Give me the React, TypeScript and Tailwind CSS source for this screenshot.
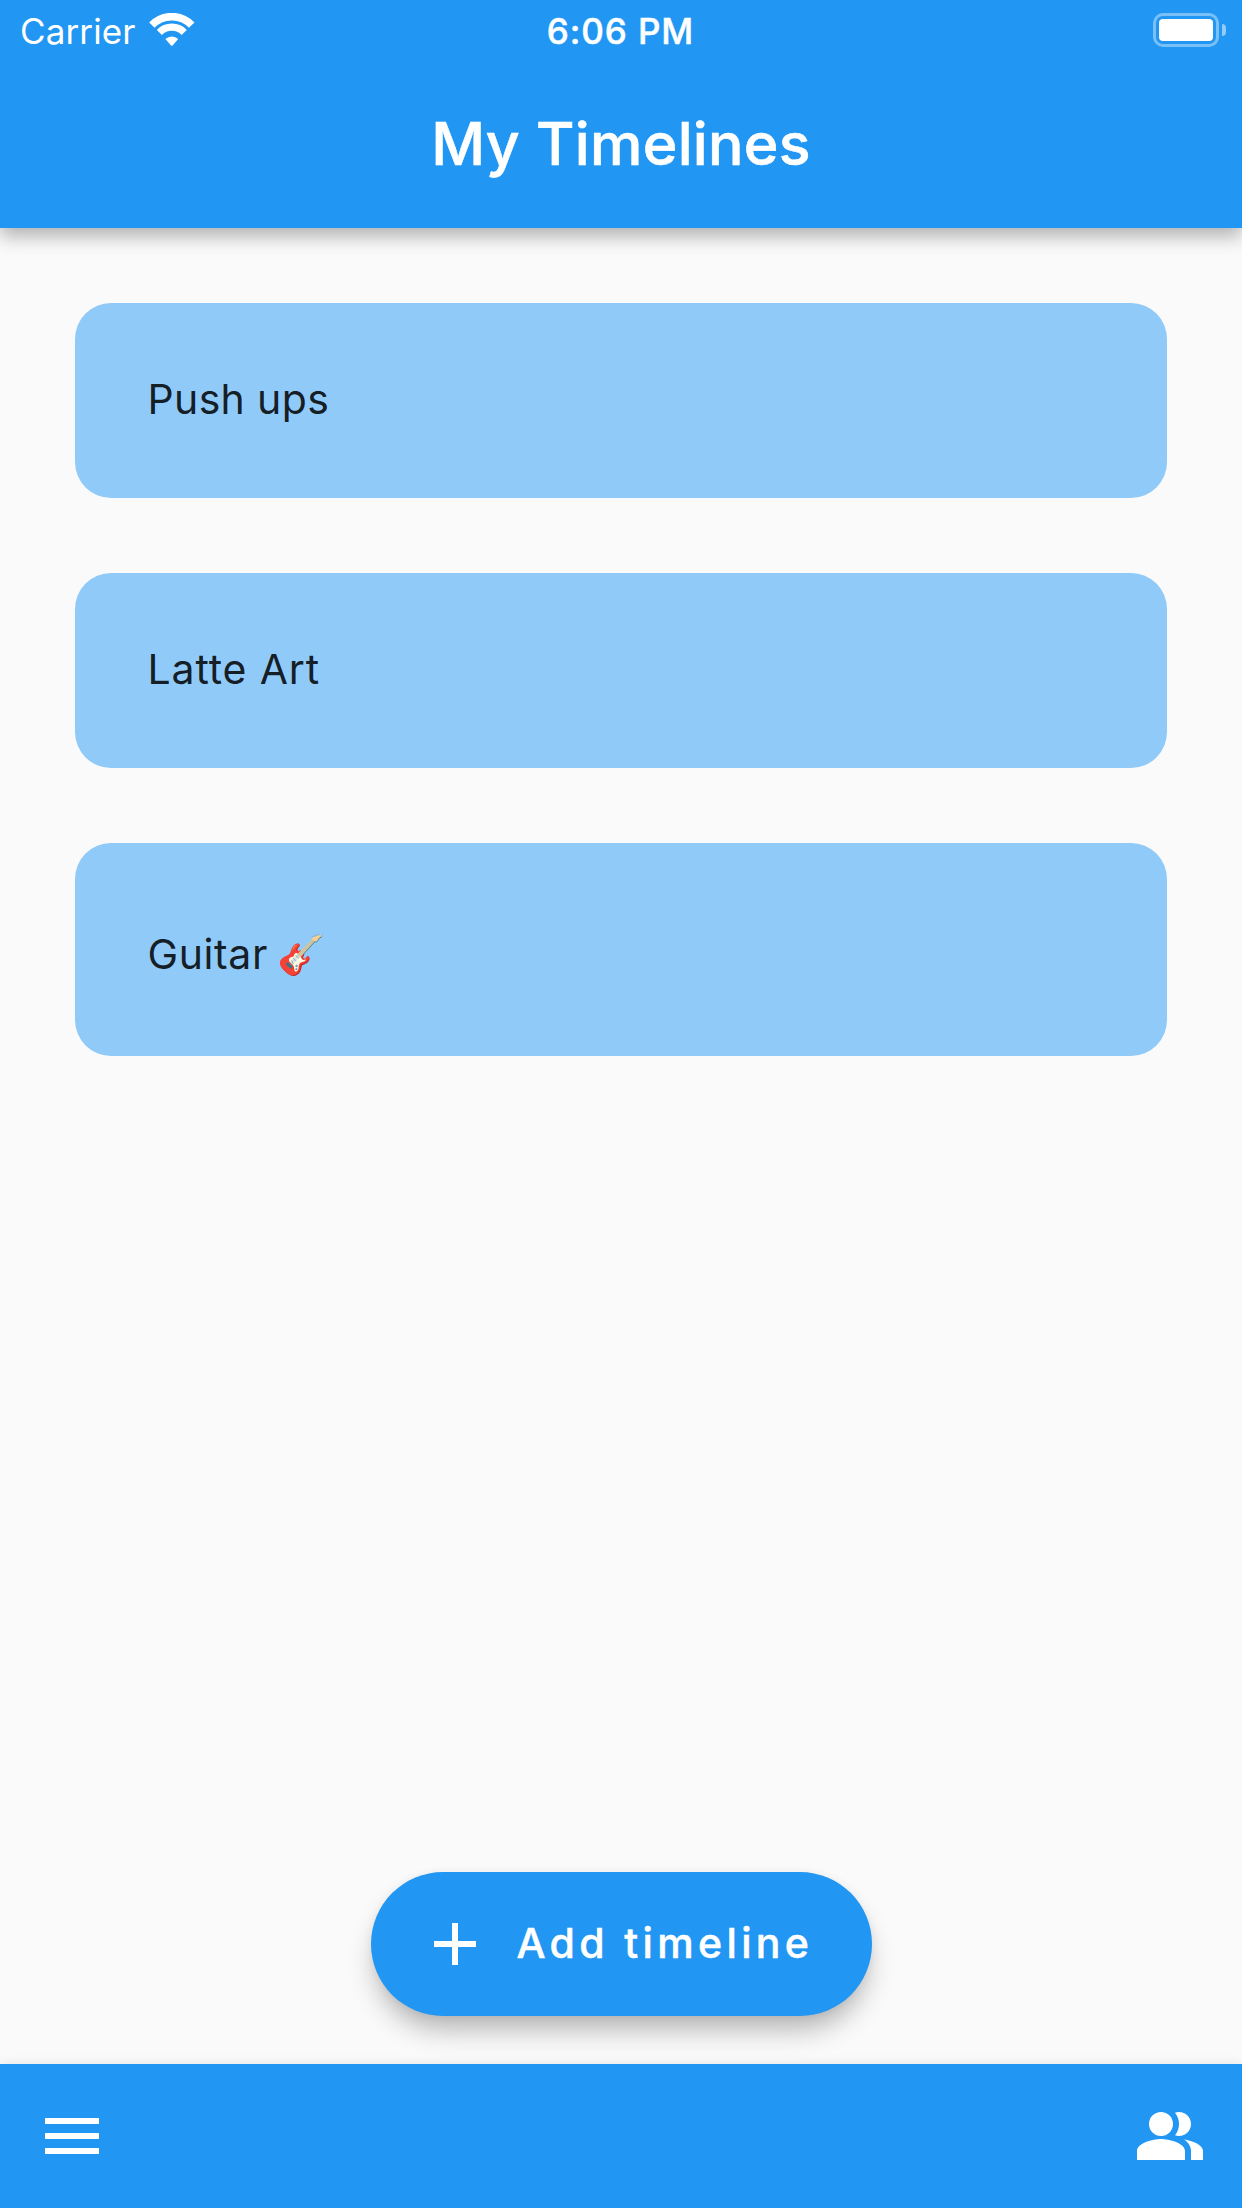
import React from "react";
import { MdAdd, MdMenu, MdPeopleAlt } from "react-icons/md";

function WifiIcon() {
  return (
    <svg width="46" height="34" viewBox="0 0 46 34" fill="none" className="shrink-0">
      <path d="M2.9 12.1A27.6 27.6 0 0 1 42.7 12.1" stroke="white" strokeWidth="7.6" />
      <path d="M10.4 19.4A17.2 17.2 0 0 1 35.2 19.4" stroke="white" strokeWidth="7.2" />
      <path d="M16.4 26A9.3 9.3 0 0 1 29.2 26L23.6 32.4Q22.8 33.3 22 32.4Z" fill="white" />
    </svg>
  );
}

function Battery() {
  return (
    <div className="flex items-center gap-[3px]">
      <div className="h-[34px] w-[66px] rounded-[10px] border-3 border-white/40 p-[3px]">
        <div className="h-full w-full rounded-[4px] bg-white" />
      </div>
      <div className="h-3 w-1 rounded-r-full bg-white/50" />
    </div>
  );
}

function StatusBar() {
  return (
    <div className="grid h-[60px] grid-cols-3 items-center pr-4 pl-5">
      <div className="flex items-center">
        <span className="w-[129px] pt-[2px] text-[35px] leading-[44px] tracking-[0.13px]">Carrier</span>
        <WifiIcon />
      </div>
      <div className="pt-[2px] pr-[5px] text-center text-[35px] leading-[44px] font-medium tracking-[0.9px] [-webkit-text-stroke:0.5px_white]">
        6:06 PM
      </div>
      <div className="flex justify-end">
        <Battery />
      </div>
    </div>
  );
}

function AppBar() {
  return (
    <header className="relative z-10 h-[228px] bg-[#2196f3] text-white shadow-[0_8px_18px_0_rgba(0,0,0,0.3)]">
      <StatusBar />
      <h1 className="text-center text-[59px] leading-[167px] font-medium tracking-[0.3px] [-webkit-text-stroke:0.6px_white]">
        My Timelines
      </h1>
    </header>
  );
}

const timelines = [
  { name: "Push ups", style: "h-[195px] pt-[71px] tracking-[0.35px]" },
  { name: "Latte Art", style: "h-[195px] pt-[71px] tracking-[0.85px]" },
  { name: "Guitar", emoji: "🎸", style: "h-[213px] pt-[86px] tracking-[0.6px]" },
];

export default function App() {
  return (
    <div className="flex h-[2208px] w-[1242px] flex-col overflow-hidden bg-[#fafafa] font-['Inter',sans-serif]">
      <AppBar />
      <main className="flex flex-1 flex-col items-center justify-between pb-12">
        <ul className="flex w-full flex-col gap-[75px] px-[75px] pt-[75px]">
          {timelines.map((t) => (
            <li
              key={t.name}
              className={`flex items-start rounded-[36px] bg-[#90caf9] pl-[72.5px] text-[41px] leading-[51px] text-black/87 ${t.style}`}
            >
              <span>{t.name}</span>
              {t.emoji && <span className="ml-[9.5px] text-[38.5px] text-black">{t.emoji}</span>}
            </li>
          ))}
        </ul>
        <button className="flex h-36 w-[501px] items-center rounded-full bg-[#2196f3] pl-12 text-white shadow-[0_18px_28px_-6px_rgba(0,0,0,0.3),0_0_10px_0_rgba(0,0,0,0.05)]">
          <MdAdd size={72} />
          <span className="ml-[26px] pb-[2px] text-[41px] leading-[50px] font-medium tracking-[4.35px] whitespace-nowrap [-webkit-text-stroke:0.5px_white]">
            Add timeline
          </span>
        </button>
      </main>
      <nav className="relative z-10 flex h-36 items-center justify-between bg-[#2196f3] px-9 text-white shadow-[0_-1px_10px_0_rgba(0,0,0,0.08)]">
        <MdMenu size={72} />
        <MdPeopleAlt size={72} />
      </nav>
    </div>
  );
}
